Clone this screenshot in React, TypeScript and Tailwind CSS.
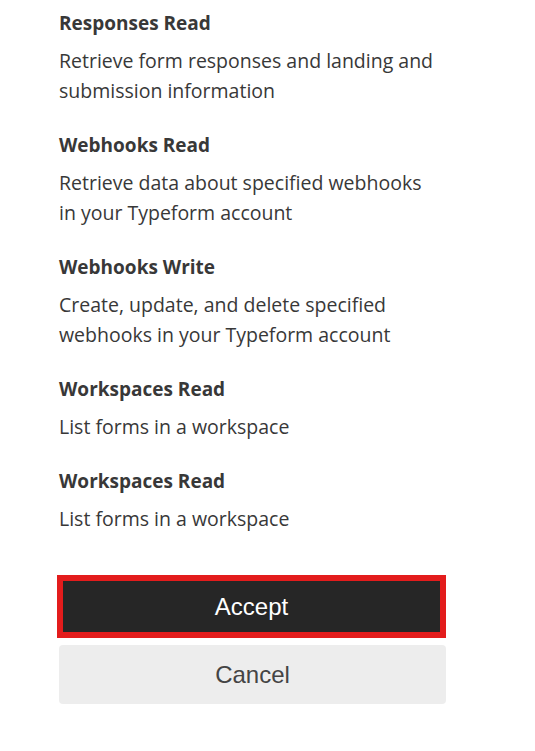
import React from "react";

const items = [
  { title: "Responses Read", desc: "Retrieve form responses and landing and submission information" },
  { title: "Webhooks Read", desc: "Retrieve data about specified webhooks in your Typeform account" },
  { title: "Webhooks Write", desc: "Create, update, and delete specified webhooks in your Typeform account" },
  { title: "Workspaces Read", desc: "List forms in a workspace" },
  { title: "Workspaces Read", desc: "List forms in a workspace" },
];

export default function App() {
  return (
    <div className="w-[535px] h-[751px] bg-white overflow-hidden" style={{ fontFamily: "'Open Sans', 'Noto Sans', sans-serif" }}>
      <div className="pl-[59px] pt-[11px] w-[446px]">
        <div className="flex flex-col gap-[27px] w-[387px]">
          {items.map((it, i) => (
            <div key={i} className="flex flex-col gap-[11px]">
              <div className="text-[19px] leading-[24px] font-bold text-[#383838]">{it.title}</div>
              <div className="text-[19.5px] leading-[30px] text-[#383838] pr-[10px]">{it.desc}</div>
            </div>
          ))}
        </div>
        <div className="mt-[41px] flex flex-col gap-[7px]" style={{ fontFamily: "'Liberation Sans', Arial, sans-serif" }}>
          <button className="-ml-[2px] w-[389px] h-[63px] border-[6px] border-[#e31c1c] bg-[#262626] text-white text-[24px] flex items-center justify-center">
            Accept
          </button>
          <button className="w-[387px] h-[59px] rounded-[4px] bg-[#ededed] text-[#444444] text-[24px] flex items-center justify-center">
            Cancel
          </button>
        </div>
      </div>
    </div>
  );
}
